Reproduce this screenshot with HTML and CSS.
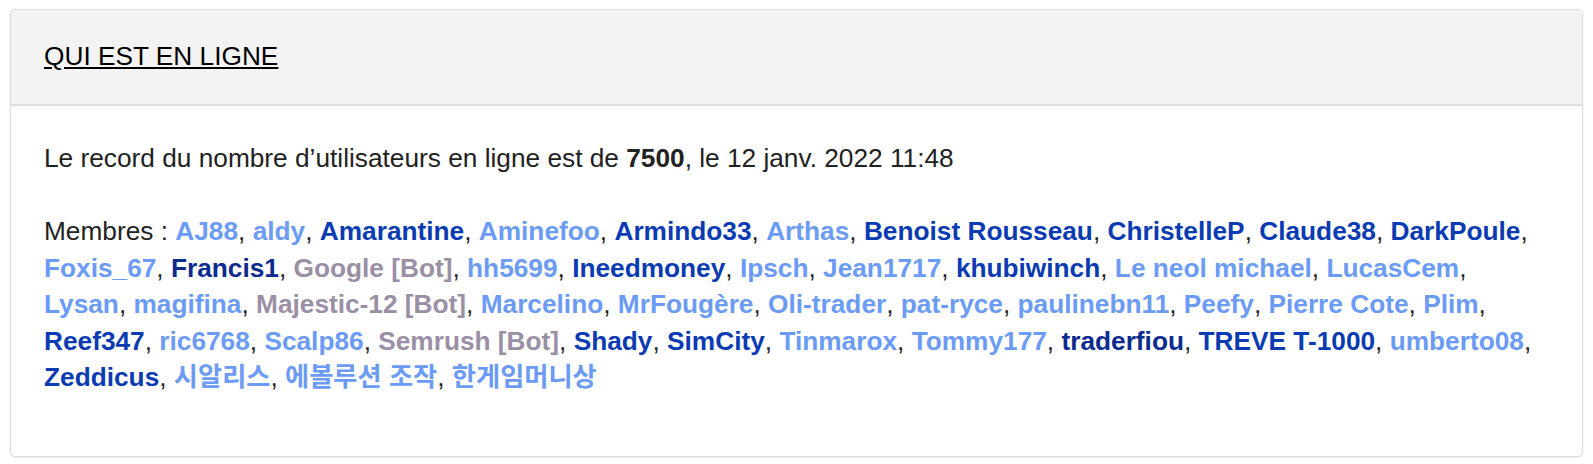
FILE: index.html
```html
<!DOCTYPE html>
<html lang="fr">
<head>
    <meta charset="UTF-8">
    <title>Qui est en ligne</title>
    <link rel="stylesheet" href="styles.css">
</head>
<body>
    <div class="panel">
        <div class="panel-header">
            <h3><a href="#">Qui est en ligne</a></h3>
        </div>
        <div class="panel-body">
            <p>Le record du nombre d’utilisateurs en ligne est de <strong>7500</strong>, le 12 janv. 2022 11:48</p>
            <p class="members">Membres :
                <a class="u-light" href="#">AJ88</a>, <a class="u-light" href="#">aldy</a>, <a class="u-dark" href="#">Amarantine</a>, <a class="u-light" href="#">Aminefoo</a>, <a class="u-dark" href="#">Armindo33</a>, <a class="u-light" href="#">Arthas</a>, <a class="u-dark" href="#">Benoist Rousseau</a>, <a class="u-dark" href="#">ChristelleP</a>, <a class="u-dark" href="#">Claude38</a>, <a class="u-dark" href="#">DarkPoule</a>,<br>
                <a class="u-light" href="#">Foxis_67</a>, <a class="u-navy" href="#">Francis1</a>, <span class="u-bot">Google [Bot]</span>, <a class="u-light" href="#">hh5699</a>, <a class="u-dark" href="#">Ineedmoney</a>, <a class="u-light" href="#">Ipsch</a>, <a class="u-light" href="#">Jean1717</a>, <a class="u-dark" href="#">khubiwinch</a>, <a class="u-light" href="#">Le neol michael</a>, <a class="u-light" href="#">LucasCem</a>,<br>
                <a class="u-light" href="#">Lysan</a>, <a class="u-light" href="#">magifina</a>, <span class="u-bot">Majestic-12 [Bot]</span>, <a class="u-light" href="#">Marcelino</a>, <a class="u-light" href="#">MrFougère</a>, <a class="u-light" href="#">Oli-trader</a>, <a class="u-light" href="#">pat-ryce</a>, <a class="u-light" href="#">paulinebn11</a>, <a class="u-light" href="#">Peefy</a>, <a class="u-light" href="#">Pierre Cote</a>, <a class="u-light" href="#">Plim</a>,<br>
                <a class="u-dark" href="#">Reef347</a>, <a class="u-light" href="#">ric6768</a>, <a class="u-light" href="#">Scalp86</a>, <span class="u-bot">Semrush [Bot]</span>, <a class="u-dark" href="#">Shady</a>, <a class="u-dark" href="#">SimCity</a>, <a class="u-light" href="#">Tinmarox</a>, <a class="u-light" href="#">Tommy177</a>, <a class="u-navy" href="#">traderfiou</a>, <a class="u-dark" href="#">TREVE T-1000</a>, <a class="u-light" href="#">umberto08</a>,<br>
                <a class="u-dark" href="#">Zeddicus</a>, <a class="u-light" href="#">시알리스</a>, <a class="u-light" href="#">에볼루션 조작</a>, <a class="u-light" href="#">한게임머니상</a>
            </p>
        </div>
    </div>
</body>
</html>
```

FILE: styles.css
```css
body {
    margin: 0;
    padding: 9px 10px;
    background: #fff;
    font-family: "Liberation Sans", Arial, "Noto Sans CJK KR", sans-serif;
    color: #222;
}
.panel {
    border: 1px solid #dcdcdc;
    border-radius: 5px;
    background: #fff;
    box-shadow: 0 1px 2px rgba(0,0,0,0.08);
}
.panel-header {
    background: #f3f3f3;
    border-bottom: 2px solid #dedede;
    border-radius: 5px 5px 0 0;
    padding: 31px 33px 33px;
}
.panel-header h3 {
    margin: 0;
    font-size: 26.25px;
    font-weight: normal;
    line-height: 30px;
    text-transform: uppercase;
}
.panel-header a {
    color: #000;
    text-decoration: underline;
}
.panel-body {
    padding: 34px 33px 60px;
    font-size: 26.25px;
}
.panel-body p {
    margin: 0;
    line-height: 36.5px;
}
.panel-body p + p {
    margin-top: 36.5px;
}
.members a,
.members .u-bot {
    font-weight: bold;
    text-decoration: none;
}
.u-light {
    color: #6b9bf4;
}
.u-dark {
    color: #0a3bb2;
}
.u-navy {
    color: #0b2b8e;
}
.u-bot {
    color: #9b8fa5;
}
```
